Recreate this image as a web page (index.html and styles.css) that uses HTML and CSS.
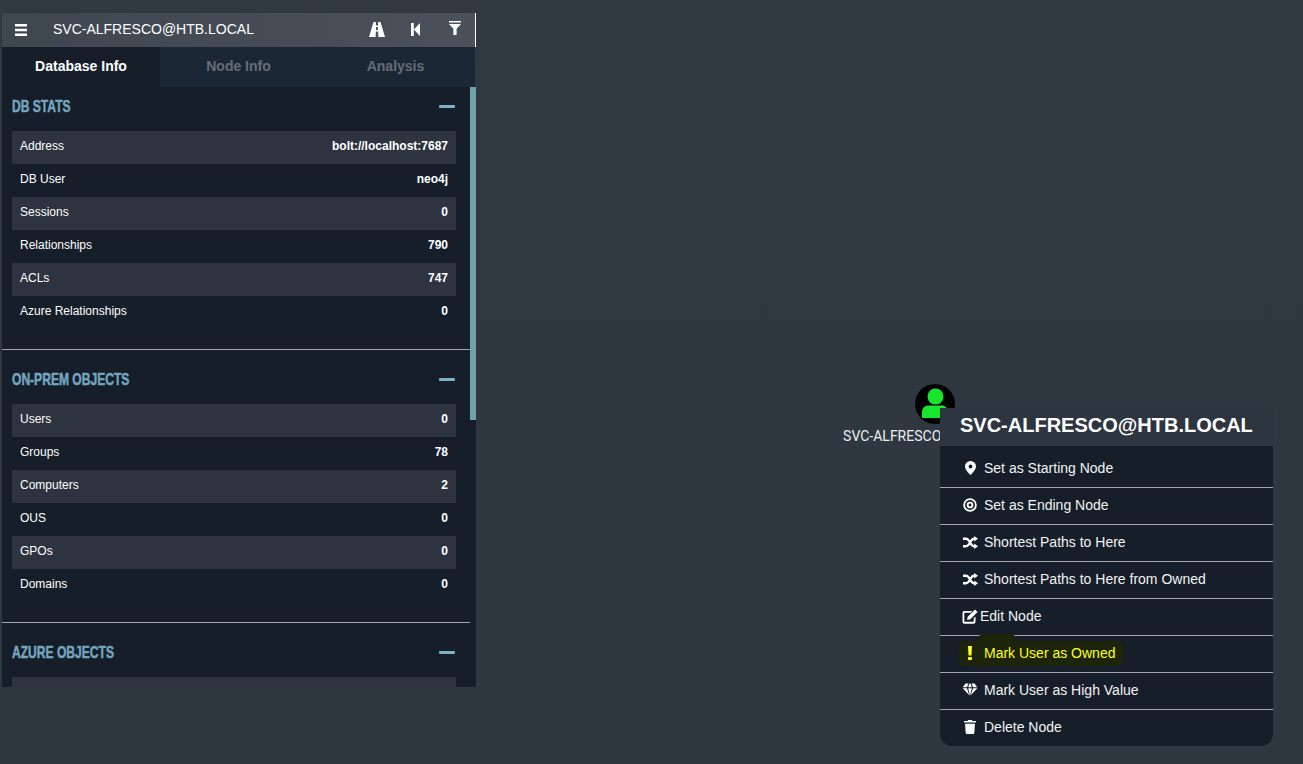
FILE: index.html
```html
<!DOCTYPE html>
<html lang="en">
<head>
<meta charset="utf-8">
<title>BloodHound</title>
<link rel="stylesheet" href="styles.css">
</head>
<body>
<div class="node">
  <svg class="node-icon" width="42" height="42" viewBox="0 0 42 42">
    <circle cx="21" cy="21" r="20" fill="#000"/>
    <circle cx="21.500" cy="13.500" r="8" fill="#17e62c"/>
    <path d="M8 35v-6c0-4 3-6.500 6.500-6.500h13c3.500 0 6.500 2.500 6.500 6.500v6z" fill="#17e62c"/>
  </svg>
  <div class="node-label">SVC-ALFRESCO@HTB.LOCAL</div>
</div>

<aside class="panel">
  <header class="search">
    <svg class="ic-bars" width="12" height="12" viewBox="0 0 12 12"><path d="M0 0h12v2.400H0zM0 4.800h12v2.400H0zM0 9.600h12V12H0z" fill="#fff"/></svg>
    <span class="search-title">SVC-ALFRESCO@HTB.LOCAL</span>
    <span class="search-tools">
      <svg class="tool-road" width="16" height="15" viewBox="0 0 16 15"><path d="M4.500 0h2.500l-.2 3.500h2.400L9 0h2.500L16 15H9.400l-.3-5.500H6.900L6.600 15H0z M7.100 5l-.1 3h2l-.1-3z" fill="#fff" fill-rule="evenodd"/></svg>
      <svg class="tool-back" width="9" height="13" viewBox="0 0 9 13"><path d="M0 0h2.800v13H0zM9 0v13L2.800 6.500z" fill="#fff"/></svg>
      <svg class="tool-filter" width="12" height="14" viewBox="0 0 12 14"><path d="M0 0h12v1.500H0zM0 3h12L7.600 7.800V14H4.400V7.800z" fill="#fff"/></svg>
    </span>
  </header>
  <nav class="tabs">
    <span class="tab tab-active">Database Info</span>
    <span class="tab">Node Info</span>
    <span class="tab">Analysis</span>
  </nav>
  <div class="scroll">
    <div class="thumb"></div>
    <section class="section">
      <div class="section-head"><h2 class="section-title">DB STATS</h2><span class="minus"></span></div>
      <div class="row"><span>Address</span><b>bolt://localhost:7687</b></div>
      <div class="row"><span>DB User</span><b>neo4j</b></div>
      <div class="row"><span>Sessions</span><b>0</b></div>
      <div class="row"><span>Relationships</span><b>790</b></div>
      <div class="row"><span>ACLs</span><b>747</b></div>
      <div class="row"><span>Azure Relationships</span><b>0</b></div>
    </section>
    <section class="section">
      <div class="section-head"><h2 class="section-title">ON-PREM OBJECTS</h2><span class="minus"></span></div>
      <div class="row"><span>Users</span><b>0</b></div>
      <div class="row"><span>Groups</span><b>78</b></div>
      <div class="row"><span>Computers</span><b>2</b></div>
      <div class="row"><span>OUS</span><b>0</b></div>
      <div class="row"><span>GPOs</span><b>0</b></div>
      <div class="row"><span>Domains</span><b>0</b></div>
    </section>
    <section class="section">
      <div class="section-head"><h2 class="section-title">AZURE OBJECTS</h2><span class="minus"></span></div>
      <div class="row"><span>&nbsp;</span></div>
    </section>
  </div>
</aside>

<div class="menu">
  <div class="menu-head">SVC-ALFRESCO@HTB.LOCAL</div>
  <ul class="menu-list">
    <li class="menu-item">
      <span class="mi"><svg width="11" height="14" viewBox="0 0 11 14"><path d="M5.500 0A5.500 5.500 0 0 1 11 5.500c0 2.700-3.500 6.700-5.500 8.500C3.500 12.200 0 8.200 0 5.500A5.500 5.500 0 0 1 5.500 0zm0 3.600a1.900 1.900 0 1 0 0 3.800 1.900 1.900 0 0 0 0-3.800z" fill="#fff" fill-rule="evenodd"/></svg></span>Set as Starting Node
    </li>
    <li class="menu-item">
      <span class="mi"><svg width="14" height="14" viewBox="0 0 14 14"><circle cx="7" cy="7" r="5.900" fill="none" stroke="#fff" stroke-width="1.800"/><circle cx="7" cy="7" r="2.400" fill="none" stroke="#fff" stroke-width="1.900"/></svg></span>Set as Ending Node
    </li>
    <li class="menu-item">
      <span class="mi"><svg width="15" height="13" viewBox="0 0 14 12"><use href="#shuffle"/></svg></span>Shortest Paths to Here
    </li>
    <li class="menu-item">
      <span class="mi"><svg width="15" height="13" viewBox="0 0 14 12"><use href="#shuffle"/></svg></span>Shortest Paths to Here from Owned
    </li>
    <li class="menu-item">
      <span class="mi-edit"><svg width="16" height="15" viewBox="0 0 16 15"><path d="M2 2h8.300L8.500 3.800H2.300v9h9.400V9.200l1.800-1.800V13a1.800 1.800 0 0 1-1.800 1.800H2.300A1.800 1.800 0 0 1 .5 13V3.800A1.800 1.800 0 0 1 2 2z" fill="#fff"/><path d="M13 .4l2.600 2.600-7.300 7.300-3.200.6.600-3.200z" fill="#fff"/></svg></span>Edit Node
    </li>
    <li class="menu-item menu-item-owned">
      <span class="glow">
        <span class="mi"><svg width="6" height="14" viewBox="0 0 6 14"><path d="M1 0h4l-.5 9.500h-3z" fill="#ffff1a"/><rect x="1" y="11" width="4" height="3" rx=".8" fill="#ffff1a"/></svg></span>Mark User as Owned
      </span>
    </li>
    <li class="menu-item">
      <span class="mi"><svg width="16" height="14" viewBox="0 0 16 13"><path d="M3.500 0h3L5 3.700H.7zM7.500 0h1l1.300 3.700H6.200zM9.500 0h3l2.800 3.700H11zM.7 4.800H5l2.300 7zM6.200 4.800h3.600L8 12.500zM11 4.800h4.300l-6.600 7z" fill="#fff"/></svg></span>Mark User as High Value
    </li>
    <li class="menu-item">
      <span class="mi"><svg width="12" height="14" viewBox="0 0 11 13"><path d="M3.800 0h3.400l.5 1H11v1.400H0V1h3.300zM.9 3.500h9.200l-.6 8.500a1 1 0 0 1-1 1H2.500a1 1 0 0 1-1-1z" fill="#fff"/></svg></span>Delete Node
    </li>
  </ul>
</div>

<svg class="defs" width="0" height="0">
  <defs>
    <g id="shuffle">
      <path d="M0 2.500h2.700c1.200 0 1.900.6 2.600 1.500l2.600 4c.6.900 1.200 1.500 2.300 1.500h1M0 9.500h2.700c1.200 0 1.900-.6 2.600-1.500l2.600-4c.6-.9 1.200-1.500 2.300-1.500h1" fill="none" stroke="#fff" stroke-width="2.200"/>
      <path d="M10.500 0L14 2.500 10.500 5zM10.500 7L14 9.500 10.500 12z" fill="#fff"/>
    </g>
  </defs>
</svg>
</body>
</html>
```

FILE: styles.css
```css
* { box-sizing: border-box; }

html, body { height: 100%; }

body {
  margin: 0;
  background: linear-gradient(#303842, #2e3840);
  font-family: "Liberation Sans", Arial, sans-serif;
  color: #fff;
  overflow: hidden;
  position: relative;
}

.defs { position: absolute; }

/* floating search panel */
.panel {
  position: absolute;
  left: 2px;
  top: 13px;
  width: 474px;
  display: flex;
  flex-direction: column;
}

.search {
  height: 34px;
  display: flex;
  align-items: center;
  padding-left: 13px;
  background: linear-gradient(90deg, #3e4650, #4a515b);
  border-right: 1px solid #fff;
}

.ic-bars { flex: none; }

.search-title {
  margin-left: 26px;
  padding-bottom: 2px;
  font-size: 14px;
  flex: 1;
}

.search-tools {
  display: flex;
  align-items: flex-start;
  width: 106px;
}

.tool-road { margin: -1px 26px 0 0; }
.tool-back { margin: 0 29px 0 0; }
.tool-filter { margin-top: -2px; }

.tabs {
  display: flex;
  height: 40px;
  background: #1c2735;
  margin-right: 1px;
}

.tab {
  flex: 0 0 157px;
  display: flex;
  align-items: center;
  justify-content: center;
  padding-bottom: 2px;
  font-size: 14px;
  font-weight: 700;
  color: #656d78;
}

.tab-active {
  flex-basis: 158px;
  background: #161e29;
  color: #fff;
}

.scroll {
  position: relative;
  height: 600px;
  overflow: hidden;
  background: #161e29;
  padding-right: 6px;
}

.thumb {
  position: absolute;
  right: 0;
  top: 0;
  width: 6px;
  height: 333px;
  background: #72a3ad;
}

.section {
  padding: 0 14px 20px 10px;
  border-bottom: 1px solid #a3a7ad;
}

.section + .section { padding-top: 10px; }
.section:last-child { border-bottom: 0; }

.section-head {
  height: 38px;
  margin-bottom: 6px;
  display: flex;
  align-items: center;
  justify-content: space-between;
}

.section-title {
  margin: 0;
  padding-top: 1px;
  font-size: 17px;
  font-weight: 700;
  color: #75a6c0;
  -webkit-text-stroke: .5px #75a6c0;
  transform: scaleX(.71);
  transform-origin: left center;
}

.minus {
  width: 16px;
  height: 3px;
  border-radius: 1px;
  margin-right: 1px;
  background: #7db0c9;
}

.row {
  height: 33px;
  display: flex;
  align-items: center;
  justify-content: space-between;
  padding: 0 8px 3px;
  font-size: 12px;
}

.section-head + .row,
.section-head + .row + .row + .row,
.section-head + .row + .row + .row + .row + .row { background: #2d343f; }

.row b { font-weight: 700; }

/* graph node */
.node {
  position: absolute;
  left: 914px;
  top: 383px;
  width: 42px;
  display: flex;
  flex-direction: column;
  align-items: center;
}

.node-icon { flex: none; }

.node-label {
  margin-top: 3px;
  font-family: Roboto, sans-serif;
  font-size: 14px;
  color: #eceef0;
  white-space: nowrap;
}

/* context menu */
.menu {
  position: absolute;
  left: 940px;
  top: 408px;
  width: 333px;
  background: #161e29;
  border-radius: 0 0 12px 12px;
  overflow: hidden;
}

.menu-head {
  height: 38px;
  padding: 0 0 3px 20px;
  display: flex;
  align-items: center;
  background: #2d3540;
  font-size: 20px;
  font-weight: 700;
}

.menu-list {
  list-style: none;
  margin: 0;
  padding: 5px 0 0;
}

.menu-item {
  height: 37px;
  display: flex;
  align-items: center;
  padding: 0 0 2px 22px;
  font-size: 14px;
  color: #f2f3f4;
  border-bottom: 1px solid #a3a7ad;
}

.menu-item:last-child { height: 36px; border-bottom: 0; padding-bottom: 3px; }

.mi {
  width: 16px;
  margin-right: 6px;
  display: flex;
  justify-content: center;
  flex: none;
}

.mi-edit {
  width: 18px;
  display: flex;
  flex: none;
}

.menu-item-owned { color: #ffff1a; }

.glow {
  position: relative;
  display: flex;
  align-items: center;
  height: 25px;
  margin: 0 0 0 -3px;
  padding: 0 8px 0 3px;
  background: #1c2409;
  border-radius: 5px;
}

.glow::before {
  content: "";
  position: absolute;
  left: 20px;
  top: -7px;
  width: 36px;
  height: 8px;
  border-radius: 4px 4px 0 0;
  background: #1c2409;
}
```
